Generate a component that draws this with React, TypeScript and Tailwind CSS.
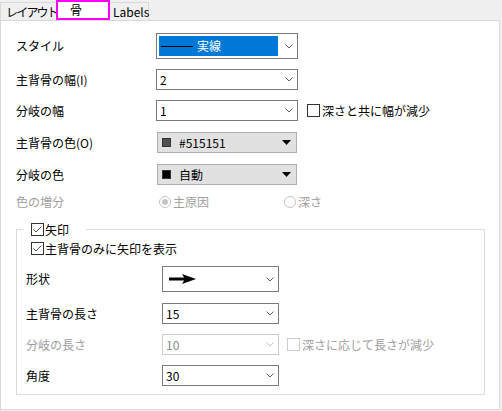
import React from 'react';

const font = "font-['Noto_Sans_CJK_JP',sans-serif]";

function Chevron({ disabled = false }: { disabled?: boolean }) {
  return (
    <svg width="8" height="5" viewBox="0 0 8 5" className="shrink-0">
      <polyline
        points="0.5,0.5 4,4 7.5,0.5"
        fill="none"
        stroke={disabled ? '#c4c4c4' : '#606060'}
        strokeWidth="1"
      />
    </svg>
  );
}

function Combo({
  width,
  height = 21,
  value,
  disabled = false,
}: {
  width: number;
  height?: number;
  value: React.ReactNode;
  disabled?: boolean;
}) {
  return (
    <div
      className={`flex items-center bg-white border pl-[3px] pr-[4px] ${
        disabled ? 'border-[#cccccc] text-[#8a8a8a]' : 'border-[#7a7a7a] text-black'
      }`}
      style={{ width, height }}
    >
      <div className="flex-1 flex items-center h-full">{value}</div>
      <Chevron disabled={disabled} />
    </div>
  );
}

function ColorPicker({ swatch, label }: { swatch: string; label: string }) {
  return (
    <div className="flex items-center w-[140px] h-[21px] bg-[#e1e1e1] border border-[#adadad] pl-[4px] pr-[5px]">
      <span className="w-[9px] h-[9px] border border-[#333]" style={{ background: swatch }} />
      <span className="ml-[8px] flex-1">{label}</span>
      <svg width="9" height="5" viewBox="0 0 9 5">
        <polygon points="0,0 9,0 4.5,5" fill="#000" />
      </svg>
    </div>
  );
}

function Checkbox({ checked = false, disabled = false }: { checked?: boolean; disabled?: boolean }) {
  return (
    <span
      className={`w-[13px] h-[13px] shrink-0 bg-white border flex items-center justify-center ${
        disabled ? 'border-[#cccccc]' : 'border-[#333333]'
      }`}
    >
      {checked && (
        <svg width="11" height="11" viewBox="0 0 11 11">
          <polyline points="1.5,5.5 4,8 9.5,2.5" fill="none" stroke="#555" strokeWidth="1" />
        </svg>
      )}
    </span>
  );
}

function Radio({ checked = false }: { checked?: boolean }) {
  return (
    <span className="w-[12px] h-[12px] rounded-full border border-[#c4c4c4] bg-white flex items-center justify-center">
      {checked && <span className="w-[6px] h-[6px] rounded-full bg-[#c4c4c4]" />}
    </span>
  );
}

function Row({
  label,
  labelWidth,
  height = 21,
  mt,
  gray = false,
  children,
}: {
  label: string;
  labelWidth: number;
  height?: number;
  mt: string;
  gray?: boolean;
  children: React.ReactNode;
}) {
  return (
    <div className={`flex items-center ${mt}`} style={{ height }}>
      <span className={gray ? 'text-[#a0a0a0]' : 'text-black'} style={{ width: labelWidth }}>
        {label}
      </span>
      {children}
    </div>
  );
}

export default function App() {
  return (
    <div className={`w-[502px] h-[411px] bg-[#f0f0f0] text-[12px] leading-[14px] ${font}`}>
      {/* tabs */}
      <div className="flex items-end h-[20px]">
        <div className="h-[18px] w-[56px] border-t border-l border-[#d9d9d9] pl-[5px] flex items-center whitespace-nowrap tracking-[-1.8px]">
          レイアウト
        </div>
        <div className="relative z-10 h-[20px] w-[54px] border-2 border-[#ff00ff] bg-white pl-[12px] pt-[1px]">骨</div>
        <div className="h-[18px] w-[39px] border-t border-r border-[#d9d9d9] pl-[3px] flex items-center">
          Labels
        </div>
      </div>

      {/* page */}
      <div className="w-[500px] h-[390px] bg-white border border-[#d9d9d9] pl-[15px] flex flex-col">
        <Row label="スタイル" labelWidth={140} height={26} mt="mt-[12px]">
          <div className="flex items-center w-[142px] h-[26px] bg-white border border-[#7a7a7a] p-[2px] pr-[4px]">
            <div className="flex items-center w-[119px] h-full bg-[#0078d7] pl-[2px]">
              <span className="w-[32px] h-px bg-black" />
              <span className="ml-[4px] text-white">実線</span>
            </div>
            <div className="flex-1 flex justify-end">
              <Chevron />
            </div>
          </div>
        </Row>

        <Row label="主背骨の幅(I)" labelWidth={140} mt="mt-[10px]">
          <Combo width={142} value="2" />
        </Row>

        <Row label="分岐の幅" labelWidth={140} mt="mt-[10px]">
          <Combo width={142} value="1" />
          <div className="ml-[9px] flex items-center gap-[2px]">
            <Checkbox />
            <span>深さと共に幅が減少</span>
          </div>
        </Row>

        <Row label="主背骨の色(O)" labelWidth={141} mt="mt-[11px]">
          <ColorPicker swatch="#515151" label="#515151" />
        </Row>

        <Row label="分岐の色" labelWidth={141} mt="mt-[11px]">
          <ColorPicker swatch="#000000" label="自動" />
        </Row>

        <Row label="色の増分" labelWidth={143} height={12} mt="mt-[11px]" gray>
          <div className="flex items-center gap-[2px] w-[125px] text-[#a0a0a0]">
            <Radio checked />
            <span>主原因</span>
          </div>
          <div className="flex items-center gap-[2px] text-[#a0a0a0]">
            <Radio />
            <span>深さ</span>
          </div>
        </Row>

        {/* arrow group */}
        <div className="relative mt-[21px] w-[469px] border border-[#dcdcdc] pl-[9px] pb-[8px] flex flex-col">
          <div className="absolute top-[-7px] left-[7px] w-[62px] h-[13px] bg-white pl-[7px] flex items-center gap-[1px]">
            <Checkbox checked />
            <span>矢印</span>
          </div>

          <div className="mt-[12px] ml-[5px] h-[13px] flex items-center gap-[1px]">
            <Checkbox checked />
            <span>主背骨のみに矢印を表示</span>
          </div>

          <Row label="形状" labelWidth={136} height={26} mt="mt-[11px]">
            <Combo
              width={117}
              height={26}
              value={
                <svg width="27" height="10" viewBox="0 0 27 10" className="ml-[3px]">
                  <rect x="0" y="3.5" width="17" height="3" fill="#000" />
                  <polygon points="13,0 27,5 13,10 16,5" fill="#000" />
                </svg>
              }
            />
          </Row>

          <Row label="主背骨の長さ" labelWidth={136} mt="mt-[11px]">
            <Combo width={117} value="15" />
          </Row>

          <Row label="分岐の長さ" labelWidth={136} mt="mt-[10px]" gray>
            <Combo width={117} value="10" disabled />
            <div className="ml-[8px] flex items-center gap-[2px] text-[#a0a0a0]">
              <Checkbox disabled />
              <span>深さに応じて長さが減少</span>
            </div>
          </Row>

          <Row label="角度" labelWidth={136} mt="mt-[10px]">
            <Combo width={117} value="30" />
          </Row>
        </div>
      </div>
    </div>
  );
}
